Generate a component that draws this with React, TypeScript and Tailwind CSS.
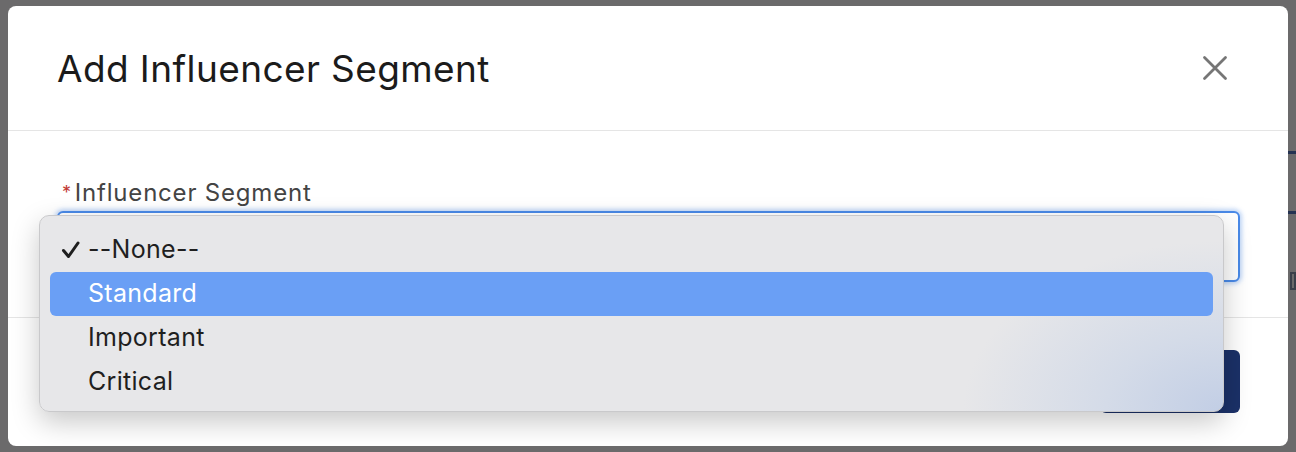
import React from 'react';

const options = ['--None--', 'Standard', 'Important', 'Critical'];

function CloseIcon() {
  return (
    <svg width="26" height="26" viewBox="0 0 26 26" fill="none">
      <path d="M2.5 2.5 L23.5 23.5 M23.5 2.5 L2.5 23.5" stroke="#767676" strokeWidth="2.8" strokeLinecap="round" />
    </svg>
  );
}

function Check() {
  return (
    <svg width="20" height="20" viewBox="0 0 20 20" fill="none">
      <path d="M2.5 10.5 L7.5 16.5 L17 3" stroke="#1f1f1f" strokeWidth="3" strokeLinecap="round" strokeLinejoin="round" />
    </svg>
  );
}

export default function App() {
  return (
    <div className="relative h-[452px] w-[1296px] overflow-hidden bg-[#6b6a6b] px-2 pt-[6px] font-['Inter',sans-serif]">
      {/* page bits peeking out behind the modal */}
      <div className="absolute right-0 top-[151px] h-[3px] w-[10px] bg-[#243252]" />
      <div className="absolute right-0 top-[211px] h-[3px] w-[10px] bg-[#243252]" />
      <div className="absolute right-0 top-[272px] h-[18px] w-[6px] border-2 border-[#3a3f4a]" />

      <div className="relative h-[440px] rounded-lg bg-white">
        {/* header */}
        <div className="flex h-[124px] items-center justify-between pl-[49px] pr-[60px]">
          <h2 className="text-[37px] leading-none tracking-[0.4px] text-[#1b1b1b]">Add Influencer Segment</h2>
          <button className="p-0" aria-label="Close">
            <CloseIcon />
          </button>
        </div>
        <div className="h-px bg-[#e5e5e5]" />

        {/* body */}
        <div className="h-[186px] pl-[49px] pr-[48px] pt-[48px]">
          <label className="flex items-center text-[24px] leading-[28px] tracking-[0.8px] text-[#444444]">
            <span className="ml-[5px] mr-[3px] text-[18px] text-[#c23934]">*</span>
            Influencer Segment
          </label>
          <div className="mt-[4px] h-[71px] rounded-[6px] border-2 border-[#4a8ae8] bg-white shadow-[0_0_4px_2px_rgba(74,138,232,0.35)]" />
        </div>
        <div className="h-px bg-[#e5e5e5]" />

        {/* footer */}
        <div className="flex justify-end pr-[48px] pt-[32px]">
          <button className="h-[63px] w-[140px] rounded-[6px] bg-[#1b3168] text-[22px] text-white">Save</button>
        </div>

        {/* native select popup */}
        <div className="absolute left-[31px] top-[209px] h-[197px] w-[1185px] rounded-[10px] border border-[#c9c9cb] bg-[radial-gradient(ellipse_260px_170px_at_100%_100%,#c2cee5_0%,#d4dbe8_45%,#e7e7e9_100%)] px-[10px] pt-[12px] shadow-[0_10px_28px_rgba(0,0,0,0.22)]">
          {options.map((opt, i) => (
            <div
              key={opt}
              className={`flex h-[44px] items-center rounded-[6px] text-[25px] tracking-[0.3px] ${
                i === 1 ? 'bg-[#6a9ff5] text-white' : 'text-[#1f1f1f]'
              }`}
            >
              <span className="flex w-[38px] justify-center pl-[4px]">{i === 0 && <Check />}</span>
              {opt}
            </div>
          ))}
        </div>
      </div>
    </div>
  );
}
